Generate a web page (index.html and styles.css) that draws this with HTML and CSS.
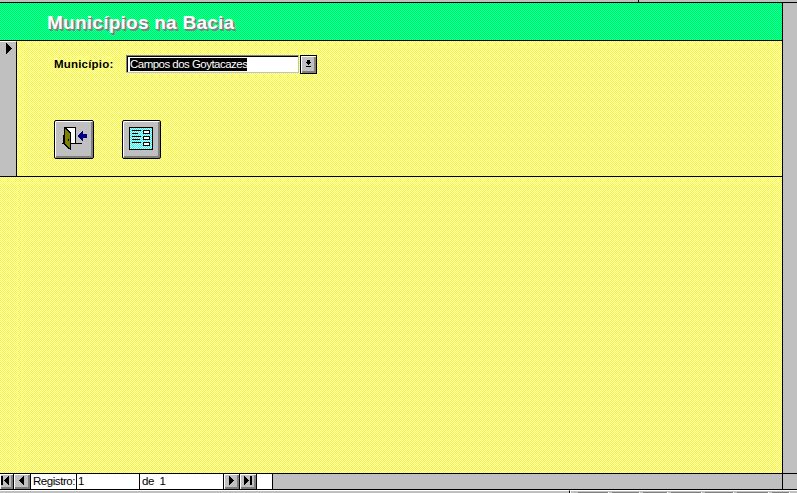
FILE: index.html
```html
<!DOCTYPE html>
<html lang="pt">
<head>
<meta charset="utf-8">
<title>Municípios na Bacia</title>
<link rel="stylesheet" href="styles.css">
</head>
<body>
<div class="window">
  <div class="topbar"><i></i></div>
  <div class="main">
    <div class="form">
      <header class="header"><h1>Municípios na Bacia</h1></header>
      <section class="record">
        <div class="selector">
          <svg width="6" height="11" shape-rendering="crispEdges"><path d="M0 0h1v1h1v1h1v1h1v1h1v1h1v1h-1v1h-1v1h-1v1h-1v1h-1v1h-1z"/></svg>
        </div>
        <div class="fields">
          <div class="field">
            <label class="label">Município:</label>
            <div class="combo"><div class="input"><span class="sel">Campos dos Goytacazes</span></div>
              <button class="drop"><svg width="5" height="7" shape-rendering="crispEdges"><path d="M1 0h3v2h1v1h-1v1h-1v1h-1v-1h-1v-1h-1v-1h1zM0 6h5v1h-5z"/></svg></button>
            </div>
          </div>
          <div class="actions">
            <button class="btn" aria-label="Sair">
              <svg width="26" height="25" shape-rendering="crispEdges">
                <path d="M3 1h10v15h-10z" fill="#fff"/>
                <path d="M2 0h12v16h6v1h-12v-1h5v-15h-11zM0 16h3v1h-3z"/>
                <path d="M2 0h2v1h1v1h1v1h1v1h1v1h1v18h-1v-1h-2v-1h-1v-1h-1v-1h-1v-1h-1v-1h-1z"/>
                <path d="M3 2h1v1h1v1h1v1h1v1h1v15h-1v-1h-1v-1h-1v-1h-1v-1h-1z" fill="#808000"/>
                <path d="M6 12h1v2h-1z"/>
                <path d="M16 8h1v-1h1v-1h1v-1h1v-1h1v3h4v4h-4v3h-1v-1h-1v-1h-1v-1h-1v-1h-1z" fill="#000080"/>
              </svg>
            </button>
            <button class="btn" aria-label="Formulário">
              <svg width="24" height="23" shape-rendering="crispEdges">
                <defs><pattern id="dots" width="2" height="2" patternUnits="userSpaceOnUse"><path d="M0 0h2v2h-2z" fill="#0ff"/><path d="M0 0h1v1h-1zM1 1h1v1h-1z" fill="#fff"/></pattern></defs>
                <path d="M0 0h24v23h-24z"/><path d="M1 1h22v21h-22z" fill="url(#dots)"/>
                <path d="M3 3h9v1h-9zM3 6h6v1h-6zM3 9h9v1h-9zM3 12h8v1h-8zM3 15h9v1h-9zM14 3h7v4h-7zM14 9h7v4h-7zM14 15h7v4h-7z"/>
                <path d="M15 4h5v2h-5zM15 10h5v2h-5zM15 16h5v2h-5z" fill="#fff"/>
              </svg>
            </button>
          </div>
        </div>
      </section>
      <section class="detail"><div class="edge"></div></section>
    </div>
    <div class="scroll"></div>
  </div>
  <nav class="nav">
    <div class="nb first"><svg width="8" height="9" shape-rendering="crispEdges"><path d="M0 0h2v9h-2zM7 0h1v9h-1v-1h-1v-1h-1v-1h-1v-1h-1v-1h1v-1h1v-1h1v-1h1z"/></svg></div>
    <div class="nb prev"><svg width="5" height="9" shape-rendering="crispEdges"><path d="M5 0v9h-1v-1h-1v-1h-1v-1h-1v-1h-1v-1h1v-1h1v-1h1v-1h1v-1z"/></svg></div>
    <div class="cell reg">Registro:</div>
    <div class="cell num">1</div>
    <div class="cell total">de&nbsp; 1</div>
    <div class="nb next"><svg width="5" height="9" shape-rendering="crispEdges"><path d="M0 0h1v1h1v1h1v1h1v1h1v1h-1v1h-1v1h-1v1h-1v1h-1z"/></svg></div>
    <div class="nb last"><svg width="9" height="9" shape-rendering="crispEdges"><path d="M0 0h1v1h1v1h1v1h1v1h1v1h-1v1h-1v1h-1v1h-1v1h-1zM6 0h2v9h-2z"/></svg></div>
    <div class="cell blank"></div>
    <div class="track"></div><div class="corner"></div>
  </nav>
  <footer class="status">
    <div class="msg"></div>
    <div class="panels"><i class="p31"></i><i class="p28"></i><i class="p25"></i><i class="p31"></i><i class="p29"></i><i class="p32"></i><i class="p18"></i></div>
  </footer>
</div>
</body>
</html>
```
FILE: styles.css
```css
* { box-sizing: border-box; }
body { margin: 0; background: #c0c0c0; overflow: hidden; font: 11px/13px "Liberation Sans", Arial, sans-serif; color: #000; }
svg { display: block; }
button { padding: 0; border-radius: 0; font: inherit; color: #000; }
.window { width: 797px; height: 493px; display: flex; flex-direction: column; }
.topbar { height: 3px; border-bottom: 1px solid #000; padding-left: 638px; flex: none; }
.topbar i { display: block; width: 1px; height: 2px; background: #000; }
.main { display: flex; height: 470px; }
.form { width: 783px; border-right: 1px solid #000; display: flex; flex-direction: column; }
.header { height: 38px; border-bottom: 1px solid #000; background: conic-gradient(#0f0 25%, #0ff 0 50%, #0f0 0 75%, #0ff 0) 0 0 / 2px 2px; padding: 8px 0 0 47px; }
h1 { margin: 0; font: bold 19px/24px "Liberation Sans", Arial, sans-serif; letter-spacing: .25px; color: #fff; text-shadow: 1px 1px #808080, 2px 2px #808080; white-space: nowrap; }
.record { display: flex; height: 136px; border-bottom: 1px solid #000; }
.selector { width: 17px; background: #c0c0c0; border-top: 1px solid #fff; border-right: 1px solid #000; padding: 1px 0 0 6px; }
.fields, .detail { background: conic-gradient(#fff 25%, #ff0 0 50%, #fff 0 75%, #ff0 0) 0 0 / 2px 2px; }
.fields { flex: 1; padding: 14px 0 0 37px; }
.field { display: flex; height: 19px; }
.label { width: 72px; padding-top: 3px; font-weight: bold; font-size: 11.5px; letter-spacing: .2px; }
.combo { display: flex; gap: 1px; }
.input { width: 173px; height: 18px; background: #fff; border: 1px solid #c0c0c0; border-top: 1px solid #808080; border-left: 1px solid #808080; box-shadow: inset 1px 1px #000; padding: 2px 0 0 3px; white-space: nowrap; }
.sel { display: block; width: 117px; height: 13px; background: #000; color: #fff; font-size: 11.5px; letter-spacing: -.53px; }
.drop { width: 17px; height: 19px; border: 1px solid #000; background: #c0c0c0; box-shadow: inset 1px 1px #fff, inset -1px -1px #808080, inset -2px -2px #808080; padding: 0 0 2px 5px; }
.actions { display: flex; gap: 28px; margin-top: 46px; }
.btn { width: 40px; height: 39px; border: 1px solid #000; border-radius: 2px; background: #c0c0c0; box-shadow: inset 1px 1px #fff, inset -1px -1px #808080, inset -2px -2px #808080; display: flex; align-items: flex-start; padding: 6px 0 0 7px; }
.btn + .btn { width: 39px; padding-left: 6px; }
.detail { flex: 1; }
.edge { width: 18px; height: 100%; background: conic-gradient(#ff0 25%, #fff 0 50%, #ff0 0 75%, #fff 0) 0 0 / 2px 2px; }
.nav { display: flex; height: 17px; border: solid #000; border-width: 1px 0; flex: none; }
.nb { background: #c0c0c0; border-right: 1px solid #000; box-shadow: inset 1px 1px #fff, inset -1px -1px #808080, inset -2px -2px #808080; padding-top: 2px; }
.first { width: 14px; padding-left: 1px; }
.prev { width: 17px; padding-left: 5px; }
.next { width: 16px; padding-left: 5px; }
.last { width: 17px; padding-left: 4px; }
.cell { background: #fff; border-right: 1px solid #000; padding: 1px 0 0 2px; white-space: nowrap; font-size: 11.5px; }
.reg { width: 46px; letter-spacing: -.45px; }
.num { width: 63px; padding-left: 1px; }
.total { width: 84px; letter-spacing: -.4px; }
.blank { width: 16px; }
.track { flex: 1; border-right: 1px solid #000; }
.corner { width: 14px; }
.status { display: flex; height: 3px; }
.msg { width: 570px; border-top: 1px solid #fff; border-right: 1px solid #000; }
.panels { flex: 1; display: flex; gap: 3px; border-left: 1px solid #fff; border-top: 1px solid #fff; padding: 1px 0 0 7px; }
.panels i { height: 1px; background: #808080; border-right: 1px solid #fff; }
.p31 { width: 31px; } .p28 { width: 28px; } .p25 { width: 25px; } .p29 { width: 29px; } .p32 { width: 32px; } .p18 { width: 18px; }
```
